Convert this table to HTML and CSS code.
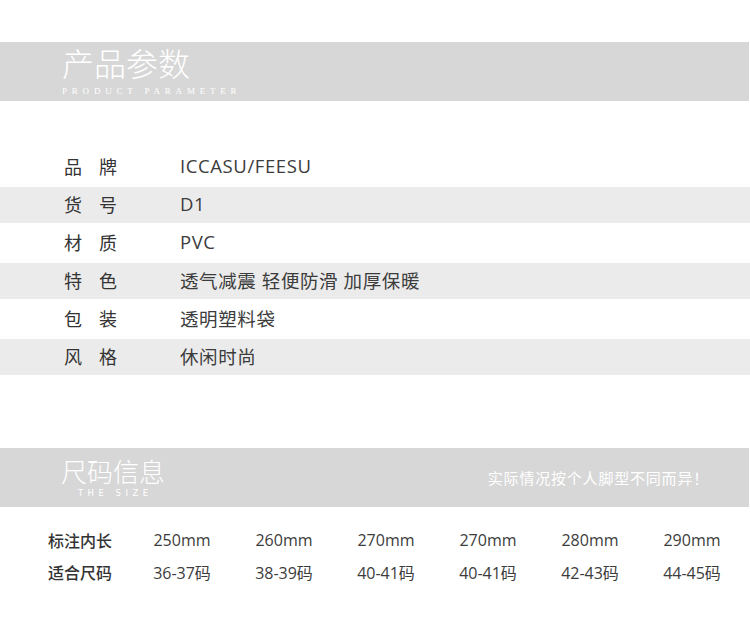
FILE: index.html
```html
<!DOCTYPE html>
<html lang="zh">
<head>
<meta charset="utf-8">
<title>产品参数</title>
<link rel="stylesheet" href="styles.css">
</head>
<body>
<div class="page">
  <div class="band band-params">
    <div class="band-title">
      <div class="title-cn">产品参数</div>
      <div class="title-en">PRODUCT PARAMETER</div>
    </div>
  </div>

  <div class="params">
    <div class="prow"><div class="plabel"><span>品</span><span>牌</span></div><div class="pval">ICCASU/FEESU</div></div>
    <div class="prow stripe"><div class="plabel"><span>货</span><span>号</span></div><div class="pval">D1</div></div>
    <div class="prow"><div class="plabel"><span>材</span><span>质</span></div><div class="pval">PVC</div></div>
    <div class="prow stripe"><div class="plabel"><span>特</span><span>色</span></div><div class="pval">透气减震 轻便防滑 加厚保暖</div></div>
    <div class="prow"><div class="plabel"><span>包</span><span>装</span></div><div class="pval">透明塑料袋</div></div>
    <div class="prow stripe"><div class="plabel"><span>风</span><span>格</span></div><div class="pval">休闲时尚</div></div>
  </div>

  <div class="band band-size">
    <div class="size-title">
      <div class="title-cn2">尺码信息</div>
      <div class="title-en2">THE SIZE</div>
    </div>
    <div class="band-note">实际情况按个人脚型不同而异！</div>
  </div>

  <div class="sizes">
    <div class="slabel">标注内长</div>
    <div class="sval">250mm</div>
    <div class="sval">260mm</div>
    <div class="sval">270mm</div>
    <div class="sval">270mm</div>
    <div class="sval">280mm</div>
    <div class="sval">290mm</div>
    <div class="slabel">适合尺码</div>
    <div class="sval">36-37码</div>
    <div class="sval">38-39码</div>
    <div class="sval">40-41码</div>
    <div class="sval">40-41码</div>
    <div class="sval">42-43码</div>
    <div class="sval">44-45码</div>
  </div>
</div>
</body>
</html>
```

FILE: styles.css
```css
html, body {
  margin: 0;
  padding: 0;
  background: #ffffff;
}
body {
  font-family: "Open Sans", "Noto Sans CJK SC", sans-serif;
  color: #333333;
}
.page {
  width: 750px;
  padding-top: 42px;
}
.band {
  width: 749px;
  background: #d7d7d7;
  color: #ffffff;
}
.band-params {
  height: 59px;
  box-sizing: border-box;
  padding: 6px 0 0 62px;
}
.title-cn {
  font-family: "Noto Sans CJK SC", sans-serif;
  font-size: 32px;
  line-height: 28px;
  font-weight: 300;
}
.title-en {
  font-family: "Liberation Serif", "DejaVu Serif", serif;
  font-size: 9px;
  line-height: 10px;
  letter-spacing: 4.8px;
  margin-top: 10px;
  color: #ffffff;
}
.params {
  margin-top: 48px;
  display: flex;
  flex-direction: column;
  gap: 2px;
}
.prow {
  height: 36px;
  box-sizing: border-box;
  padding-bottom: 3px;
  display: flex;
  align-items: center;
}
.stripe {
  background: #ebebeb;
}
.plabel {
  width: 180px;
  box-sizing: border-box;
  padding-left: 64px;
  display: flex;
  gap: 17px;
  font-family: "Noto Sans CJK SC", sans-serif;
  font-size: 18px;
  color: #333333;
}
.pval {
  font-size: 18.5px;
  letter-spacing: 0.6px;
  color: #3c3c3c;
}
.band-size {
  margin-top: 73px;
  height: 59px;
  display: flex;
  align-items: flex-start;
  justify-content: space-between;
  box-sizing: border-box;
  padding: 0 40px 0 61px;
}
.size-title {
  display: flex;
  flex-direction: column;
  align-items: center;
  padding-top: 9px;
}
.title-cn2 {
  font-family: "Noto Sans CJK SC", sans-serif;
  font-size: 26px;
  line-height: 28px;
  font-weight: 300;
}
.title-en2 {
  font-family: "DejaVu Sans", sans-serif;
  font-size: 8.5px;
  line-height: 10px;
  letter-spacing: 4.5px;
  margin-right: -4.5px;
  margin-top: 3px;
  color: #ffffff;
}
.band-note {
  font-family: "Noto Sans CJK SC", sans-serif;
  font-size: 15px;
  line-height: 20px;
  letter-spacing: 0.8px;
  margin-top: 20px;
  color: #ffffff;
}
.sizes {
  margin-top: 17px;
  display: grid;
  grid-template-columns: 83px repeat(6, 102px);
  grid-auto-rows: 32px;
  padding-left: 48px;
  align-items: center;
}
.slabel {
  font-family: "Noto Sans CJK SC", sans-serif;
  font-size: 16px;
  font-weight: 500;
  color: #333333;
}
.sval {
  text-align: center;
  font-size: 16px;
  color: #3c3c3c;
}
```
